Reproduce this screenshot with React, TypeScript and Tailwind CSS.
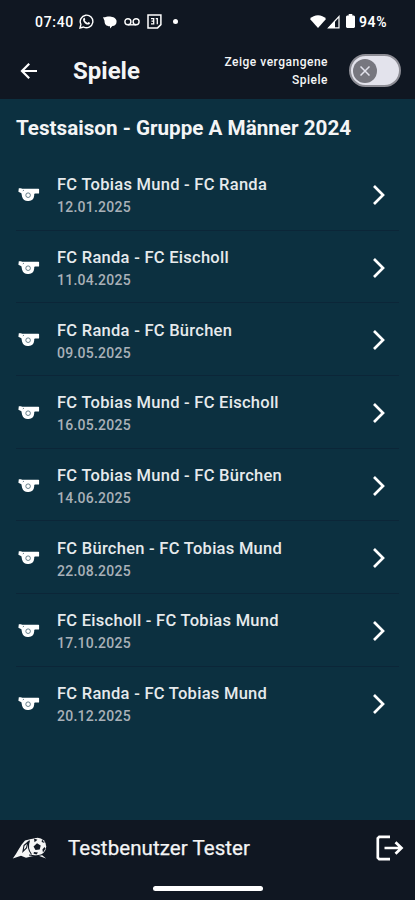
import React from 'react';

const games = [
  ['FC Tobias Mund - FC Randa', '12.01.2025'],
  ['FC Randa - FC Eischoll', '11.04.2025'],
  ['FC Randa - FC Bürchen', '09.05.2025'],
  ['FC Tobias Mund - FC Eischoll', '16.05.2025'],
  ['FC Tobias Mund - FC Bürchen', '14.06.2025'],
  ['FC Bürchen - FC Tobias Mund', '22.08.2025'],
  ['FC Eischoll - FC Tobias Mund', '17.10.2025'],
  ['FC Randa - FC Tobias Mund', '20.12.2025'],
];

function Whistle() {
  return (
    <svg className="mt-[2px] h-[14px] w-[22px] shrink-0" viewBox="0 0 22 14" fill="#fff">
      <path d="M.8.300h2.400l.7.400H20.500a.6.6 0 0 1 .6.6v3.600a.6.6 0 0 1-.6.6h-3.700l-.6.700v1.200a6.200 6.200 0 0 1-12.100 1.300L3.400 5.200.4 3.800Z" />
      <circle cx="10.100" cy="7.200" r="2.300" fill="none" stroke="#56707d" strokeWidth="0.900" />
      <path d="M4.800 2.900 6 2.100" fill="none" stroke="#0c3040" strokeWidth=".6" />
    </svg>
  );
}

function Status() {
  return (
    <div className="flex h-[42px] items-center text-white">
      <span className="ml-[35px] mt-[1px] w-[39px] whitespace-nowrap text-[14px] font-medium leading-none tracking-[0.7px]">07:40</span>
      <svg className="ml-[5px] mt-[1px] h-[15px] w-[15px]" viewBox="0 0 15 15" fill="none" stroke="#fff">
        <path d="m1 14 .9-3.7a6.3 6.3 0 1 1 2.6 2.7Z" strokeWidth="1.4" />
        <path d="M4.500 4.200c1-1 1.300-.2 1.800 1.200l-.6.9c.7 1.300 1.500 2 2.800 2.600l.9-.9c1.600.7 2.100.9 1.200 1.900-2.900 2.500-8-3-6.100-5.700Z" fill="#fff" stroke="none" />
      </svg>
      <svg className="ml-[9px] mt-[2px] h-[13px] w-[14px]" viewBox="0 0 14 13" fill="#fff">
        <path d="M0 1.300h2C4-.2 12 0 13.300 4c1 3-.8 6-3.900 6.100L7 12.600V10.200C3 10.200 1.500 8 1.500 4.700Z" />
      </svg>
      <svg className="ml-[7px] mt-[2px] h-[10px] w-[16px]" viewBox="0 0 16 10" fill="none" stroke="#fff" strokeWidth="1.4">
        <circle cx="3.900" cy="4.700" r="3" />
        <circle cx="12.100" cy="4.700" r="3" />
        <path d="M3.900 7.800h8.200" />
      </svg>
      <svg className="ml-[7px] mt-[1px] h-[15px] w-[15px]" viewBox="0 0 15 15" fill="none" stroke="#fff">
        <path d="M1 1h12.900v9.600l-3.300 3.300H1Z" strokeWidth="1.500" />
        <path d="M4 4.700h2.700v5.200H4M4.500 7.200h2.200M8.800 4.700h1.500v5.600" strokeWidth="1.300" />
      </svg>
      <span className="ml-[11px] h-[5px] w-[5px] rounded-full bg-white" />
      <svg className="ml-[132px] h-[13px] w-[16px]" viewBox="0 0 16 13" fill="#fff">
        <path d="M0 4C4-.9 12-.9 16 4L8 13Z" />
      </svg>
      <svg className="ml-[1px] mt-[1px] h-[14px] w-[13px]" viewBox="0 0 13 14">
        <path d="M1.500 12.800 12 1.500v11.300Z" fill="none" stroke="#fff" strokeWidth="1.200" />
        <path d="M1 13 8 5.500V13Z" fill="#fff" />
      </svg>
      <svg className="ml-[6px] h-[14px] w-[9px]" viewBox="0 0 9 14" fill="#fff">
        <path d="M2.700 0h3.600v1.500H8l1 1V13l-1 1H1l-1-1V2.500l1-1h1.700Z" />
      </svg>
      <span className="ml-[4px] mt-[1px] whitespace-nowrap text-[14px] font-semibold leading-none tracking-[0.600px]">94%</span>
    </div>
  );
}

export default function App() {
  return (
    <div className="flex h-[900px] w-[415px] flex-col overflow-hidden bg-[#0c3040] font-['Roboto',sans-serif] text-[#f4f5f6]">
      <header className="h-[99px] shrink-0 bg-[#101722]">
        <Status />
        <div className="flex h-[57px] items-center">
          <svg className="ml-[20px] h-[18px] w-[18px]" viewBox="0 0 18 18" fill="none" stroke="#fff" strokeWidth="2.200">
            <path d="M17 9H2.500M9.200 1.800 2 9l7.200 7.200" />
          </svg>
          <h1 className="ml-[35px] w-[69px] whitespace-nowrap text-[24px] font-bold leading-none">Spiele</h1>
          <div className="ml-[66px] w-[120px] text-right text-[12px] font-medium leading-[18px] tracking-[0.500px]">
            Zeige vergangene<br />Spiele
          </div>
          <div className="ml-[21px] flex h-[33px] w-[52px] items-center rounded-full border-2 border-[#8d8d95] bg-[#e3e3ec] pl-[2px]">
            <div className="flex h-[24px] w-[24px] items-center justify-center rounded-full bg-[#77777f]">
              <svg className="h-[10px] w-[10px]" viewBox="0 0 10 10" stroke="#e3e3ec" strokeWidth="1.500">
                <path d="m.5.5 9 9M9.500.5l-9 9" />
              </svg>
            </div>
          </div>
        </div>
      </header>
      <main className="flex-1 px-4">
        <h2 className="h-[59px] whitespace-nowrap pt-[17px] text-[20.650px] font-bold leading-[25px]">Testsaison - Gruppe A Männer 2024</h2>
        <ul>
          {games.map(([name, date]) => (
            <li key={name} className="flex h-[72.700px] items-center border-b border-[#0c2638] pl-[2px] last:border-transparent">
              <Whistle />
              <div className="ml-[17px] flex-1 whitespace-nowrap pt-[5px]">
                <p className="text-[16.500px] font-medium leading-[22px] tracking-[0.270px] text-[#e6eaec]">{name}</p>
                <p className="text-[14px] font-medium leading-[22px] tracking-[0.250px] text-[#a9b1b8]">{date}</p>
              </div>
              <svg className="mr-[13px] mt-[2px] h-[22px] w-[14px]" viewBox="0 0 14 22" fill="none" stroke="#fff" strokeWidth="2.700">
                <path d="m2 2 9 9-9 9" />
              </svg>
            </li>
          ))}
        </ul>
      </main>
      <footer className="h-[80px] shrink-0 bg-[#101722]">
        <div className="flex h-[57px] items-center">
          <svg className="ml-[12px] h-[23px] w-[36px]" viewBox="0 0 36 23">
            <path d="M.8 21.500C5 16 8 9 13 3.500l6-1.500 5-.8 4 15 6 5.300-8-3-6 .8-6 1.500-5-2Z" fill="#f5f5f5" />
            <circle cx="25.500" cy="9.500" r="8.700" fill="#f5f5f5" />
            <path d="m25 6.200 3.700 2.300-1 4-4.200.5-2-3.600ZM22 1.500l3.500 1.200-3 2.500ZM30 2.500l2.700 3.400-3-1ZM32.500 10l1 1.500-2.500 4-.6-3ZM22 15l4 .5-1.500 2-3-1Z" fill="#101722" />
            <path d="M17.500 3.500c-2 5-1 10 2 14M12 8.500l4-3.500-1.500 6-3.500 3.500Z" fill="none" stroke="#101722" strokeWidth="1.100" />
            <path d="M17 18l7 1 7-1.500" fill="none" stroke="#101722" strokeWidth="1" />
          </svg>
          <span className="ml-[20px] w-[184px] whitespace-nowrap text-[20.500px] leading-none tracking-[0.060px] [-webkit-text-stroke:0.250px_#f4f5f6]">Testbenutzer Tester</span>
          <svg className="mb-[1px] ml-[124px] h-[26px] w-[28px]" viewBox="0 0 28 26" fill="none" stroke="#fff" strokeWidth="2.700">
            <path d="M14 1.800H3.300L1.800 3.300v19.400l1.500 1.500H14" />
            <path d="M8.500 13h16M19.500 7.200l6 5.800-6 5.800" />
          </svg>
        </div>
        <div className="mx-auto mt-[9px] h-[5px] w-[110px] rounded-full bg-white" />
      </footer>
    </div>
  );
}
